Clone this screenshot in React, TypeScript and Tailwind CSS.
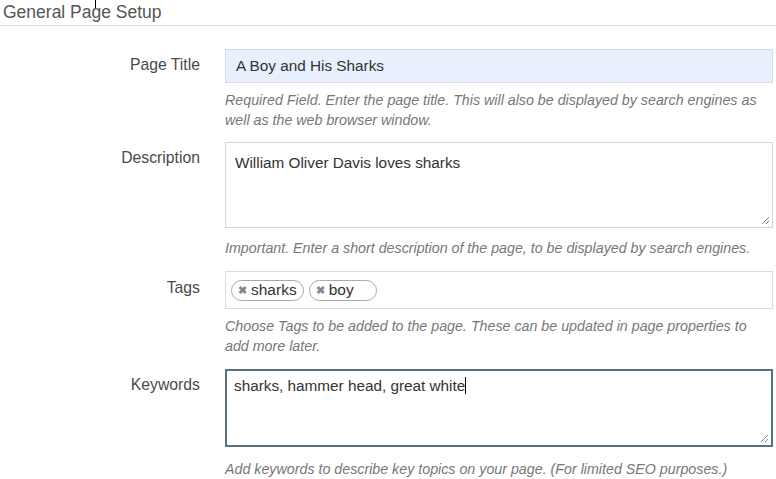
import React from 'react';

const Grip: React.FC = () => (
  <svg className="absolute right-[2px] bottom-[2px]" width="9" height="9" viewBox="0 0 9 9">
    <path d="M8 1 L1 8 M8 5 L5 8" stroke="#8a8a8a" strokeWidth="1" />
  </svg>
);

const TagPill: React.FC<{ label: string; wide?: boolean }> = ({ label, wide }) => (
  <span
    className={`flex items-center h-[21px] rounded-full border border-[#a9a9a9] pl-[6px] ${wide ? 'pr-[22px]' : 'pr-[6px]'} text-[15.5px] text-[#333] leading-none`}
  >
    <span className="text-[#888] text-[11px] font-bold mr-[4px]">&#x2716;</span>
    {label}
  </span>
);

const Help: React.FC<{ children: React.ReactNode; className?: string }> = ({ children, className = '' }) => (
  <p className={`italic text-[14.25px] leading-[20px] text-[#777] ${className}`}>{children}</p>
);

const labelCls = 'w-[200px] shrink-0 text-right text-[15.75px] leading-[20px] text-[#4a4a4a]';

const App: React.FC = () => {
  return (
    <div className="relative w-[776px] h-[479px] bg-white overflow-hidden font-[family-name:'Liberation_Sans',Arial,sans-serif] text-[#333]">
      {/* cursor artifact */}
      <div className="absolute left-[95px] top-0 w-px h-[8px] bg-black" />

      {/* Heading */}
      <div className="h-[26px] border-b border-[#e2e2e2] pl-[3px]">
        <h1 className="text-[17.5px] leading-[24px] text-[#555]">General Page Setup</h1>
      </div>

      {/* Page Title */}
      <div className="flex mt-[23px]">
        <label className={`${labelCls} pt-[6px]`}>Page Title</label>
        <div className="ml-[25px] w-[548px]">
          <div className="h-[34px] border border-[#d8dde3] bg-[#e8f0fe] flex items-center px-[10px] text-[15.3px]">
            A Boy and His Sharks
          </div>
          <Help className="mt-[7px]">
            Required Field. Enter the page title. This will also be displayed by search engines as well as the web browser window.
          </Help>
        </div>
      </div>

      {/* Description */}
      <div className="flex mt-[12px]">
        <label className={`${labelCls} pt-[6px]`}>Description</label>
        <div className="ml-[25px] w-[548px]">
          <div className="relative h-[86px] border border-[#d6d6d6] px-[9px] pt-[10px] text-[15.3px] leading-[20px]">
            William Oliver Davis loves sharks
            <Grip />
          </div>
          <Help className="mt-[10px]">
            Important. Enter a short description of the page, to be displayed by search engines.
          </Help>
        </div>
      </div>

      {/* Tags */}
      <div className="flex mt-[13px]">
        <label className={`${labelCls} pt-[7px]`}>Tags</label>
        <div className="ml-[25px] w-[548px]">
          <div className="h-[38px] border border-[#dcdcdc] flex items-center gap-[5px] px-[5px]">
            <TagPill label="sharks" />
            <TagPill label="boy" wide />
          </div>
          <Help className="mt-[7px]">
            Choose Tags to be added to the page. These can be updated in page properties to add more later.
          </Help>
        </div>
      </div>

      {/* Keywords */}
      <div className="flex mt-[13px]">
        <label className={`${labelCls} pt-[6px]`}>Keywords</label>
        <div className="ml-[25px] w-[548px]">
          <div className="relative h-[78px] border-2 border-[#5e6f80] px-[7px] pt-[5px] text-[15.3px] leading-[20px]">
            sharks, hammer head, great white
            <span className="inline-block w-px h-[17px] bg-black align-[-3px]" />
            <Grip />
          </div>
          <Help className="mt-[12px]">
            Add keywords to describe key topics on your page. (For limited SEO purposes.)
          </Help>
        </div>
      </div>
    </div>
  );
};

export default App;
